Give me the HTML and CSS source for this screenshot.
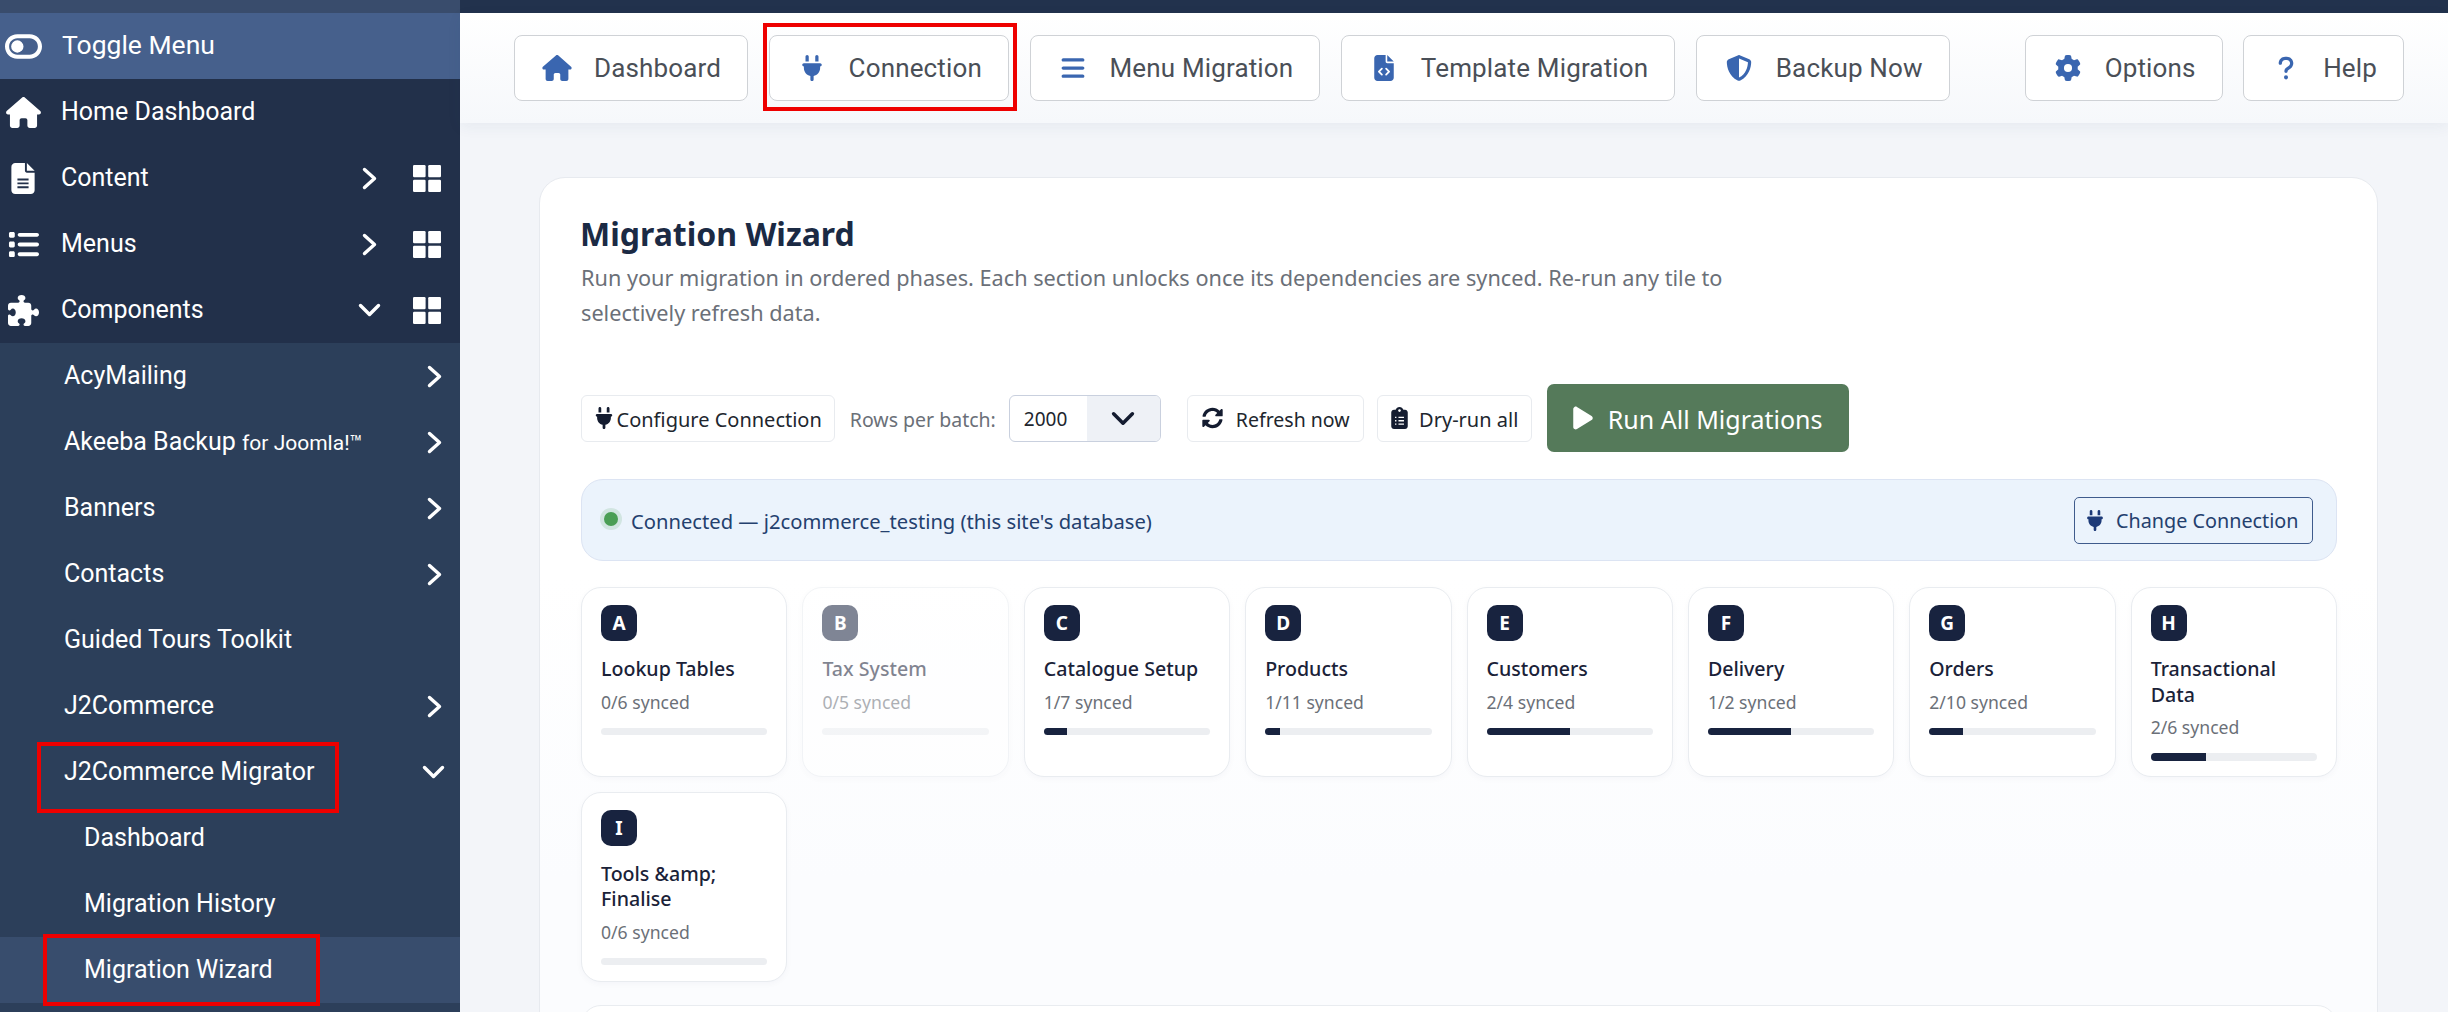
FILE: index.html
```html
<!DOCTYPE html>
<html lang="en">
<head>
<meta charset="utf-8">
<title>Migration Wizard</title>
<link rel="stylesheet" href="styles.css">
</head>
<body>
<svg class="defs" aria-hidden="true">
  <symbol id="i-house" viewBox="0 0 576 512"><path d="M575.8 255.5c0 18-15 32.1-32 32.1h-32l.7 160.2c0 2.7-.2 5.4-.5 8.1V472c0 22.1-17.9 40-40 40H456c-1.1 0-2.2 0-3.3-.1c-1.4 .1-2.8 .1-4.2 .1H416 392c-22.1 0-40-17.9-40-40V448 384c0-17.7-14.3-32-32-32H256c-17.7 0-32 14.3-32 32v64 24c0 22.1-17.9 40-40 40H160 128.1c-1.5 0-3-.1-4.5-.2c-1.2 .1-2.4 .2-3.6 .2H104c-22.1 0-40-17.9-40-40V360c0-.9 0-1.9 .1-2.8V287.6H32c-18 0-32-14-32-32.1c0-9 3-17 10-24L266.4 8c7-7 15-8 22-8s15 2 21 7L564.8 231.5c8 7 12 15 11 24z"/></symbol>
  <symbol id="i-plug" viewBox="0 0 384 512"><path d="M96 0C78.3 0 64 14.3 64 32v96h64V32c0-17.7-14.3-32-32-32zM288 0c-17.7 0-32 14.3-32 32v96h64V32c0-17.7-14.3-32-32-32zM32 160c-17.7 0-32 14.3-32 32s14.3 32 32 32v32c0 77.4 55 142 128 156.8V480c0 17.7 14.3 32 32 32s32-14.3 32-32V412.8C297 398 352 333.4 352 256V224c17.7 0 32-14.3 32-32s-14.3-32-32-32H32z"/></symbol>
  <symbol id="i-bars" viewBox="0 0 448 512"><path d="M0 96C0 78.3 14.3 64 32 64H416c17.7 0 32 14.3 32 32s-14.3 32-32 32H32C14.3 128 0 113.7 0 96zM0 256c0-17.7 14.3-32 32-32H416c17.7 0 32 14.3 32 32s-14.3 32-32 32H32c-17.7 0-32-14.3-32-32zM448 416c0 17.7-14.3 32-32 32H32c-17.7 0-32-14.3-32-32s14.3-32 32-32H416c17.7 0 32 14.3 32 32z"/></symbol>
  <symbol id="i-filecode" viewBox="0 0 384 512"><path d="M64 0C28.7 0 0 28.7 0 64V448c0 35.3 28.7 64 64 64H320c35.3 0 64-28.7 64-64V160H256c-17.7 0-32-14.3-32-32V0H64zM256 0V128H384L256 0z"/><path d="M150 270L92 328L150 386M234 270L292 328L234 386" fill="none" stroke="#fff" stroke-width="36" stroke-linecap="round" stroke-linejoin="round"/></symbol>
  <symbol id="i-filelines" viewBox="0 0 384 512"><path d="M64 0C28.7 0 0 28.7 0 64V448c0 35.3 28.7 64 64 64H320c35.3 0 64-28.7 64-64V160H256c-17.7 0-32-14.3-32-32V0H64zM256 0V128H384L256 0z"/><path d="M100 272H284M100 336H284M100 400H284" fill="none" stroke="#22304a" stroke-width="30"/></symbol>
  <symbol id="i-shield" viewBox="0 0 512 512"><path d="M256 0c4.6 0 9.2 1 13.4 2.9L457.7 82.8c22 9.3 38.4 31 38.3 57.2c-.5 99.2-41.3 280.7-213.6 363.2c-16.7 8-36.1 8-52.8 0C57.3 420.7 16.5 239.2 16 140c-.1-26.2 16.3-47.9 38.3-57.2L242.7 2.9C246.8 1 251.4 0 256 0zm0 66.8V444.8C394 378 431.1 230.1 432 141.4L256 66.8l0 0z"/></symbol>
  <symbol id="i-gear" viewBox="0 0 512 512"><path d="M495.9 166.6c3.2 8.7 .5 18.4-6.4 24.6l-43.3 39.4c1.1 8.3 1.7 16.8 1.7 25.4s-.6 17.1-1.7 25.4l43.3 39.4c6.9 6.2 9.6 15.9 6.4 24.6c-4.4 11.9-9.7 23.3-15.8 34.3l-4.7 8.1c-6.6 11-14 21.4-22.1 31.2c-5.9 7.2-15.7 9.6-24.5 6.8l-55.7-17.7c-13.4 10.3-28.2 18.9-44 25.4l-12.5 57.1c-2 9.1-9 16.3-18.2 17.8c-13.8 2.3-28 3.5-42.5 3.5s-28.7-1.2-42.5-3.5c-9.2-1.5-16.2-8.7-18.2-17.8l-12.5-57.1c-15.8-6.5-30.6-15.1-44-25.4L83.1 425.9c-8.8 2.8-18.6 .3-24.5-6.8c-8.1-9.8-15.5-20.2-22.1-31.2l-4.7-8.1c-6.1-11-11.4-22.4-15.8-34.3c-3.2-8.7-.5-18.4 6.4-24.6l43.3-39.4C64.6 273.1 64 264.6 64 256s.6-17.1 1.7-25.4L22.4 191.2c-6.9-6.2-9.6-15.9-6.4-24.6c4.4-11.9 9.7-23.3 15.8-34.3l4.7-8.1c6.6-11 14-21.4 22.1-31.2c5.9-7.2 15.7-9.6 24.5-6.8l55.7 17.7c13.4-10.3 28.2-18.9 44-25.4l12.5-57.1c2-9.1 9-16.3 18.2-17.8C227.3 1.2 241.5 0 256 0s28.7 1.2 42.5 3.5c9.2 1.5 16.2 8.7 18.2 17.8l12.5 57.1c15.8 6.5 30.6 15.1 44 25.4l55.7-17.7c8.8-2.8 18.6-.3 24.5 6.8c8.1 9.8 15.5 20.2 22.1 31.2l4.7 8.1c6.1 11 11.4 22.4 15.8 34.3zM256 336a80 80 0 1 0 0-160 80 80 0 1 0 0 160z"/></symbol>
  <symbol id="i-question" viewBox="0 0 320 512"><path d="M80 160c0-35.3 28.7-64 64-64h32c35.3 0 64 28.7 64 64v3.6c0 21.8-11.1 42.1-29.4 53.8l-42.2 27.1c-25.2 16.2-40.4 44.1-40.4 74V320c0 17.7 14.3 32 32 32s32-14.3 32-32v-1.4c0-8.2 4.2-15.8 11-20.2l42.2-27.1c36.6-23.6 58.8-64.1 58.8-107.7V160c0-70.7-57.3-128-128-128H144C73.3 32 16 89.3 16 160c0 17.7 14.3 32 32 32s32-14.3 32-32zm80 320a40 40 0 1 0 0-80 40 40 0 1 0 0 80z"/></symbol>
  <symbol id="i-list" viewBox="0 0 512 512"><path d="M40 48C26.7 48 16 58.7 16 72v48c0 13.3 10.7 24 24 24H88c13.3 0 24-10.7 24-24V72c0-13.3-10.7-24-24-24H40zM192 64c-17.7 0-32 14.3-32 32s14.3 32 32 32H480c17.7 0 32-14.3 32-32s-14.3-32-32-32H192zm0 160c-17.7 0-32 14.3-32 32s14.3 32 32 32H480c17.7 0 32-14.3 32-32s-14.3-32-32-32H192zm0 160c-17.7 0-32 14.3-32 32s14.3 32 32 32H480c17.7 0 32-14.3 32-32s-14.3-32-32-32H192zM16 232v48c0 13.3 10.7 24 24 24H88c13.3 0 24-10.7 24-24V232c0-13.3-10.7-24-24-24H40c-13.3 0-24 10.7-24 24zM40 368c-13.3 0-24 10.7-24 24v48c0 13.3 10.7 24 24 24H88c13.3 0 24-10.7 24-24V392c0-13.3-10.7-24-24-24H40z"/></symbol>
  <symbol id="i-puzzle" viewBox="0 0 512 512"><path d="M192 104.8c0-9.2-5.8-17.3-13.2-22.8C167.2 73.3 160 61.3 160 48c0-26.5 28.7-48 64-48s64 21.5 64 48c0 13.3-7.2 25.3-18.8 34c-7.4 5.5-13.2 13.6-13.2 22.8c0 12.8 10.4 23.2 23.2 23.2H336c26.5 0 48 21.5 48 48v56.8c0 12.8 10.4 23.2 23.2 23.2c9.2 0 17.3-5.8 22.8-13.2c8.7-11.6 20.7-18.8 34-18.8c26.5 0 48 28.7 48 64s-21.5 64-48 64c-13.3 0-25.3-7.2-34-18.8c-5.5-7.4-13.6-13.2-22.8-13.2c-12.8 0-23.2 10.4-23.2 23.2V464c0 26.5-21.5 48-48 48H279.2c-12.8 0-23.2-10.4-23.2-23.2c0-9.2 5.8-17.3 13.2-22.8c11.6-8.7 18.8-20.7 18.8-34c0-26.5-28.7-48-64-48s-64 21.5-64 48c0 13.3 7.2 25.3 18.8 34c7.4 5.5 13.2 13.6 13.2 22.8c0 12.8-10.4 23.2-23.2 23.2H48c-26.5 0-48-21.5-48-48V343.2C0 330.4 10.4 320 23.2 320c9.2 0 17.3 5.8 22.8 13.2C54.7 344.8 66.7 352 80 352c26.5 0 48-28.7 48-64s-21.5-64-48-64c-13.3 0-25.3 7.2-34 18.8C40.5 250.2 32.4 256 23.2 256C10.4 256 0 245.6 0 232.8V176c0-26.5 21.5-48 48-48H168.8c12.8 0 23.2-10.4 23.2-23.2z"/></symbol>
  <symbol id="i-toggle" viewBox="0 0 576 512"><path d="M384 128c70.7 0 128 57.3 128 128s-57.3 128-128 128H192c-70.7 0-128-57.3-128-128s57.3-128 128-128H384zM576 256c0-106-86-192-192-192H192C86 64 0 150 0 256S86 448 192 448H384c106 0 192-86 192-192zM192 352a96 96 0 1 0 0-192 96 96 0 1 0 0 192z"/></symbol>
  <symbol id="i-sync" viewBox="0 0 512 512"><path d="M370.72 133.28C339.458 104.008 298.888 87.962 255.848 88c-77.458.068-144.328 53.178-162.791 126.85-1.344 5.363-6.122 9.15-11.651 9.15H24.103c-7.498 0-13.194-6.807-11.807-14.176C33.933 94.924 134.813 8 256 8c66.448 0 126.791 26.136 171.315 68.685L463.03 40.97C478.149 25.851 504 36.559 504 57.941V192c0 13.255-10.745 24-24 24H345.941c-21.382 0-32.09-25.851-16.971-40.971l41.75-41.749zM32 296h134.059c21.382 0 32.09 25.851 16.971 40.971l-41.75 41.75c31.262 29.273 71.835 45.319 114.876 45.28 77.418-.07 144.315-53.144 162.787-126.849 1.344-5.363 6.122-9.15 11.651-9.15h57.304c7.498 0 13.194 6.807 11.807 14.176C478.067 417.076 377.187 504 256 504c-66.448 0-126.791-26.136-171.315-68.685L48.97 471.03C33.851 486.149 8 475.441 8 454.059V320c0-13.255 10.745-24 24-24z"/></symbol>
  <symbol id="i-clip" viewBox="0 0 384 512"><path d="M192 0c-41.8 0-77.4 26.7-90.5 64H64C28.7 64 0 92.7 0 128V448c0 35.3 28.7 64 64 64H320c35.3 0 64-28.7 64-64V128c0-35.3-28.7-64-64-64H282.5C269.4 26.7 233.8 0 192 0z"/><path d="M88 240H120M168 240H296M88 320H120M168 320H296M88 400H120M168 400H296" fill="none" stroke="#fff" stroke-width="30"/><circle cx="192" cy="84" r="30" fill="#fff"/></symbol>
  <symbol id="i-play" viewBox="0 0 384 512"><path d="M73 39c-14.8-9.1-33.4-9.4-48.5-.9S0 62.6 0 80V432c0 17.4 9.4 33.4 24.5 41.9s33.7 8.1 48.5-.9L361 297c14.3-8.7 23-24.2 23-41s-8.7-32.2-23-41L73 39z"/></symbol>
  <symbol id="i-right" viewBox="0 0 15 23"><path d="M2.5 2.5L12.5 11.5L2.5 20.5" fill="none" stroke="currentColor" stroke-width="3.4" stroke-linecap="round" stroke-linejoin="round"/></symbol>
  <symbol id="i-down" viewBox="0 0 23 14"><path d="M2.5 2.5L11.5 11.5L20.5 2.5" fill="none" stroke="currentColor" stroke-width="3.4" stroke-linecap="round" stroke-linejoin="round"/></symbol>
  <symbol id="i-grid" viewBox="0 0 28 27"><rect x="0" y="0" width="12.6" height="12.2" rx="1.2"/><rect x="15.2" y="0" width="12.8" height="12.2" rx="1.2"/><rect x="0" y="14.8" width="12.6" height="12.2" rx="1.2"/><rect x="15.2" y="14.8" width="12.8" height="12.2" rx="1.2"/></symbol>
</svg>

<div class="app">
  <aside class="sidebar">
    <div class="side-strip"></div>
    <a class="side-row toggle"><span class="side-icon"><svg class="ic ic-toggle"><use href="#i-toggle"/></svg></span><span class="side-label">Toggle Menu</span></a>
    <a class="side-row"><span class="side-icon"><svg class="ic ic-home"><use href="#i-house"/></svg></span><span class="side-label">Home Dashboard</span></a>
    <a class="side-row"><span class="side-icon"><svg class="ic ic-file"><use href="#i-filelines"/></svg></span><span class="side-label">Content</span><svg class="ic chev-r top-chev"><use href="#i-right"/></svg><svg class="ic ic-grid"><use href="#i-grid"/></svg></a>
    <a class="side-row"><span class="side-icon"><svg class="ic ic-list"><use href="#i-list"/></svg></span><span class="side-label">Menus</span><svg class="ic chev-r top-chev"><use href="#i-right"/></svg><svg class="ic ic-grid"><use href="#i-grid"/></svg></a>
    <a class="side-row"><span class="side-icon"><svg class="ic ic-puzzle"><use href="#i-puzzle"/></svg></span><span class="side-label">Components</span><svg class="ic chev-d top-chev-d"><use href="#i-down"/></svg><svg class="ic ic-grid"><use href="#i-grid"/></svg></a>
    <div class="submenu">
      <a class="sub-row"><span class="side-label">AcyMailing</span><svg class="ic chev-r"><use href="#i-right"/></svg></a>
      <a class="sub-row"><span class="side-label">Akeeba Backup <small class="side-small">for Joomla!™</small></span><svg class="ic chev-r"><use href="#i-right"/></svg></a>
      <a class="sub-row"><span class="side-label">Banners</span><svg class="ic chev-r"><use href="#i-right"/></svg></a>
      <a class="sub-row"><span class="side-label">Contacts</span><svg class="ic chev-r"><use href="#i-right"/></svg></a>
      <a class="sub-row"><span class="side-label">Guided Tours Toolkit</span></a>
      <a class="sub-row"><span class="side-label">J2Commerce</span><svg class="ic chev-r"><use href="#i-right"/></svg></a>
      <a class="sub-row mark-migrator"><span class="side-label">J2Commerce Migrator</span><svg class="ic chev-d sub-chev-d"><use href="#i-down"/></svg></a>
      <a class="sub-row deep"><span class="side-label">Dashboard</span></a>
      <a class="sub-row deep"><span class="side-label">Migration History</span></a>
      <a class="sub-row deep active mark-wizard"><span class="side-label">Migration Wizard</span></a>
    </div>
  </aside>

  <div class="main">
    <div class="main-strip"></div>
    <nav class="topnav">
      <a class="nav-btn"><svg class="ic nav-ic"><use href="#i-house"/></svg>Dashboard</a>
      <a class="nav-btn mark-connection"><svg class="ic nav-ic"><use href="#i-plug"/></svg>Connection</a>
      <a class="nav-btn"><svg class="ic nav-ic"><use href="#i-bars"/></svg>Menu Migration</a>
      <a class="nav-btn"><svg class="ic nav-ic"><use href="#i-filecode"/></svg>Template Migration</a>
      <a class="nav-btn"><svg class="ic nav-ic"><use href="#i-shield"/></svg>Backup Now</a>
      <span class="nav-spacer"></span>
      <a class="nav-btn"><svg class="ic nav-ic"><use href="#i-gear"/></svg>Options</a>
      <a class="nav-btn"><svg class="ic nav-ic"><use href="#i-question"/></svg>Help</a>
    </nav>

    <div class="content">
      <section class="card">
        <h1 class="card-title">Migration Wizard</h1>
        <p class="card-desc">Run your migration in ordered phases. Each section unlocks once its dependencies are synced. Re-run any tile to selectively refresh data.</p>

        <div class="toolbar">
          <a class="tool-btn cfg"><svg class="ic tool-ic"><use href="#i-plug"/></svg><span class="tool-text">Configure Connection</span></a>
          <span class="rows-label">Rows per batch:</span>
          <div class="select"><span class="select-value">2000</span><span class="select-arrow"><svg class="ic"><use href="#i-down"/></svg></span></div>
          <a class="tool-btn refresh"><svg class="ic tool-ic"><use href="#i-sync"/></svg><span class="tool-text">Refresh now</span></a>
          <a class="tool-btn dry"><svg class="ic tool-ic"><use href="#i-clip"/></svg><span class="tool-text">Dry-run all</span></a>
          <a class="run-btn"><svg class="ic run-ic"><use href="#i-play"/></svg><span class="run-text">Run All Migrations</span></a>
        </div>

        <div class="conn-bar">
          <span class="conn-dot"></span>
          <span class="conn-text">Connected — j2commerce_testing (this site's database)</span>
          <a class="conn-btn"><svg class="ic conn-ic"><use href="#i-plug"/></svg>Change Connection</a>
        </div>

        <div class="tiles">
          <div class="tile"><span class="badge">A</span><div class="tile-title">Lookup Tables</div><div class="tile-sub">0/6 synced</div><div class="bar"><div class="fill" style="width:0%"></div></div></div>
          <div class="tile locked"><span class="badge">B</span><div class="tile-title">Tax System</div><div class="tile-sub">0/5 synced</div><div class="bar"><div class="fill" style="width:0%"></div></div></div>
          <div class="tile"><span class="badge">C</span><div class="tile-title">Catalogue Setup</div><div class="tile-sub">1/7 synced</div><div class="bar"><div class="fill" style="width:14%"></div></div></div>
          <div class="tile"><span class="badge">D</span><div class="tile-title">Products</div><div class="tile-sub">1/11 synced</div><div class="bar"><div class="fill" style="width:9%"></div></div></div>
          <div class="tile"><span class="badge">E</span><div class="tile-title">Customers</div><div class="tile-sub">2/4 synced</div><div class="bar"><div class="fill" style="width:50%"></div></div></div>
          <div class="tile"><span class="badge">F</span><div class="tile-title">Delivery</div><div class="tile-sub">1/2 synced</div><div class="bar"><div class="fill" style="width:50%"></div></div></div>
          <div class="tile"><span class="badge">G</span><div class="tile-title">Orders</div><div class="tile-sub">2/10 synced</div><div class="bar"><div class="fill" style="width:20%"></div></div></div>
          <div class="tile"><span class="badge">H</span><div class="tile-title">Transactional Data</div><div class="tile-sub">2/6 synced</div><div class="bar"><div class="fill" style="width:33%"></div></div></div>
          <div class="tile"><span class="badge">I</span><div class="tile-title">Tools &amp;amp; Finalise</div><div class="tile-sub">0/6 synced</div><div class="bar"><div class="fill" style="width:0%"></div></div></div>
        </div>

        <div class="next-panel"></div>
      </section>
    </div>
  </div>
</div>
</body>
</html>
```
FILE: styles.css
```css
*, *::before, *::after { box-sizing: border-box; }
html, body { margin: 0; height: 100%; overflow: hidden; }
body { font-family: "Noto Sans", sans-serif; background: #f3f5f9; color: #1a2238; }
.defs { display: none; }
.ic { display: block; fill: currentColor; flex: none; }

.app { display: flex; height: 1012px; overflow: hidden; }

/* Sidebar */
.sidebar { width: 460px; flex: none; background: #22304a; color: #fff; font-family: Roboto, sans-serif; font-size: 25px; display: flex; flex-direction: column; }
.side-strip { height: 13px; background: #394c6c; }
.side-row { height: 66px; display: flex; align-items: center; }
.side-row.toggle { background: #46608c; }
.side-row.toggle .side-label { font-size: 26.5px; padding-left: 1px; padding-bottom: 3px; }
.side-icon { width: 46px; margin-right: 15px; display: flex; justify-content: center; flex: none; }
.side-label { flex: 1; white-space: nowrap; padding-bottom: 1px; }
.ic-toggle { width: 37px; height: 33px; margin-left: 1px; }
.ic-home { width: 35px; height: 31px; }
.ic-file { width: 24px; height: 31px; }
.ic-list { width: 31px; height: 31px; }
.ic-puzzle { width: 31px; height: 31px; }
.chev-r { width: 15px; height: 23px; }
.chev-d { width: 23px; height: 14px; }
.top-chev { margin-right: 36px; }
.top-chev-d { margin-right: 32px; }
.ic-grid { width: 28px; height: 27px; margin-right: 19px; }

.submenu { flex: 1; background: #2c3f5a; }
.sub-row { height: 66px; display: flex; align-items: center; padding: 0 18px 0 64px; position: relative; }
.side-small { font-size: 21px; }
.sub-chev-d { margin-right: -3px; }
.sub-row.deep { padding-left: 84px; }
.sub-row.active { background: #384d6d; }
.mark-migrator::after, .mark-wizard::after, .mark-connection::after { content: ""; position: absolute; border: 4px solid #ee0000; pointer-events: none; }
.mark-migrator::after { left: 37px; width: 302px; top: 3px; height: 71px; }
.mark-wizard::after { left: 43px; width: 277px; top: -3px; height: 72px; }

/* Main */
.main { flex: 1; min-width: 0; display: flex; flex-direction: column; }
.main-strip { height: 13px; background: #22324d; flex: none; }
.topnav { height: 110px; flex: none; display: flex; align-items: flex-start; gap: 20.5px; padding: 22px 44px 0 54px; background: linear-gradient(#ffffff, #f6f8fb); box-shadow: 0 4px 14px rgba(40, 60, 100, .06); position: relative; }
.nav-spacer { flex: 1; }
.nav-btn { height: 66px; display: flex; align-items: center; gap: 20px; padding: 0 26px 0 25px; background: #fff; border: 1.5px solid #cfd2d6; border-radius: 8px; font-family: Roboto, sans-serif; font-size: 26px; letter-spacing: .15px; color: #4a4f57; position: relative; white-space: nowrap; }
.nav-ic { color: #3a66b0; width: 34px; height: 26px; }
.mark-connection::after { left: -7px; right: -9px; top: -13px; bottom: -11px; }

.content { flex: 1; padding: 54px 70px 0 79px; }
.card { height: 1000px; background: linear-gradient(#ffffff 0, #ffffff 400px, #fbfcfe 700px); border: 1px solid #e7eaef; border-radius: 26px; padding: 35px 40px 0 41px; }
.card-title { margin: 0 0 5px -1px; font-size: 32px; line-height: 42px; font-weight: 700; color: #1b2a44; }
.card-desc { margin: 0; width: 1170px; font-size: 21.7px; line-height: 35px; color: #6b7078; }

.toolbar { display: flex; align-items: center; margin-top: 54px; height: 68px; }
.tool-btn { height: 47px; display: flex; align-items: center; background: #fff; border: 1.5px solid #e8ebef; border-radius: 6px; font-size: 20px; color: #21262e; white-space: nowrap; }
.tool-text { padding-top: 2px; }
.tool-ic { height: 22px; width: 18px; color: #141c30; }
.cfg { padding: 0 12.5px; gap: 4px; }
.refresh { padding: 0 13.5px; gap: 13px; margin-left: 26.5px; font-size: 19.5px; }
.dry { padding: 0 13px; gap: 11px; margin-left: 13px; font-size: 20px; }
.refresh .tool-ic { width: 21px; }
.dry .tool-ic { width: 17px; }
.rows-label { margin: 2px 13px 0 14.5px; font-size: 19.5px; color: #6b7078; white-space: nowrap; }
.select { width: 152px; height: 47px; display: flex; border: 1.5px solid #c9d0de; border-radius: 6px; background: #fff; overflow: hidden; }
.select-value { width: 77px; padding-left: 14px; font-size: 19px; line-height: 46px; color: #21262e; }
.select-arrow { flex: 1; background: #eef1f6; display: flex; align-items: center; justify-content: center; color: #141c30; }
.select-arrow .ic { width: 24px; height: 15px; }
.run-btn { margin-left: 14.5px; height: 68px; display: flex; align-items: center; gap: 14.5px; padding: 0 26.5px; background: #557a5a; border-radius: 7px; color: #fff; font-size: 25px; white-space: nowrap; }
.run-text { padding-top: 2px; }
.run-ic { width: 20px; height: 26px; }

.conn-bar { margin-top: 27px; height: 82px; display: flex; align-items: center; background: #ebf3fc; border: 1.5px solid #dce4f3; border-radius: 22px; padding: 0 23px 0 22px; }
.conn-dot { width: 14px; height: 14px; border-radius: 50%; background: #4a9e55; box-shadow: 0 0 0 4px rgba(74, 158, 85, .16); margin-top: -2px; flex: none; }
.conn-text { margin-left: 13px; flex: 1; font-size: 20.2px; color: #24406e; white-space: nowrap; padding-top: 2px; }
.conn-btn { height: 47px; width: 239px; display: flex; align-items: center; gap: 13px; padding: 0 12px; border: 1.5px solid #3f5b8c; border-radius: 5px; font-size: 19.8px; color: #24406e; white-space: nowrap; }
.conn-ic { width: 16px; height: 21px; color: #1d3a78; }

.tiles { margin-top: 26px; display: grid; grid-template-columns: repeat(8, 1fr); gap: 14.5px 15px; }
.tile { height: 190px; padding: 17px 19px 0; background: #fff; border: 1.5px solid #e9ecf0; border-radius: 20px; box-shadow: 0 2px 6px rgba(30, 45, 80, .03); }
.tile.locked { opacity: .55; }
.badge { width: 36px; height: 36px; display: flex; align-items: center; justify-content: center; background: #18233f; border-radius: 10px; color: #fff; font-size: 19px; font-weight: 700; }
.tile-title { margin-top: 15px; font-size: 19.6px; line-height: 25.5px; font-weight: 500; color: #1a2238; }
.tile-sub { margin-top: 8px; font-size: 17.6px; line-height: 24px; color: #6b7078; }
.bar { margin-top: 14px; height: 7.5px; border-radius: 4px; background: #eceef1; overflow: hidden; }
.fill { height: 100%; background: #18233f; }

.next-panel { margin-top: 23px; height: 120px; background: #fff; border: 1.5px solid #e9ecf0; border-radius: 20px; }
```
